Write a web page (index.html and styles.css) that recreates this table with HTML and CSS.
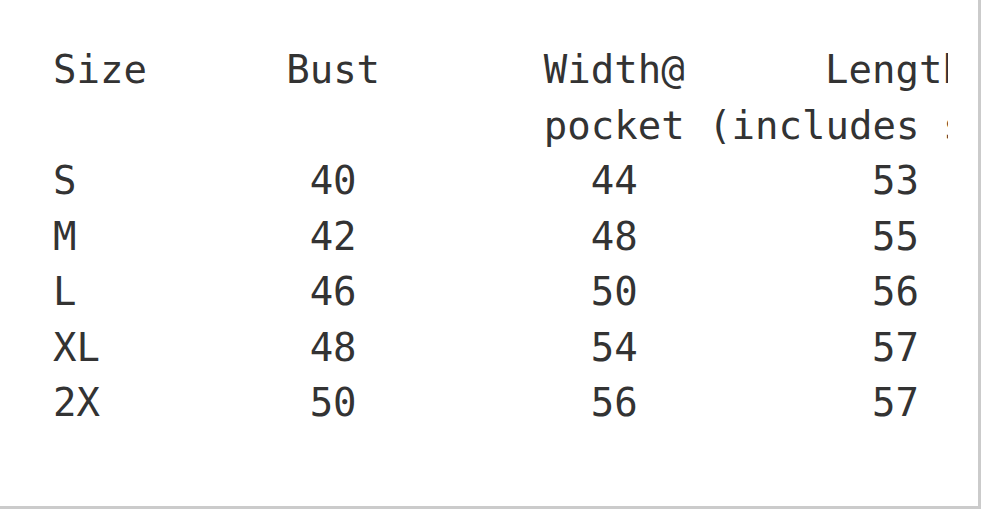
FILE: index.html
```html
<!DOCTYPE html>
<html>
<head>
<meta charset="utf-8">
<link rel="stylesheet" href="styles.css">
</head>
<body>
<div class="page">
  <div class="scroll">
    <table class="sizes">
      <colgroup>
        <col class="c1"><col class="c2"><col class="c3"><col class="c4">
      </colgroup>
      <thead>
        <tr>
          <th class="left">Size</th>
          <th>Bust</th>
          <th><div class="stack"><span>Width@</span><span class="nowrap">pocket (includes shoulder)</span></div></th>
          <th>Length</th>
        </tr>
      </thead>
      <tbody>
        <tr><td class="left">S</td><td>40</td><td>44</td><td>53</td></tr>
        <tr><td class="left">M</td><td>42</td><td>48</td><td>55</td></tr>
        <tr><td class="left">L</td><td>46</td><td>50</td><td>56</td></tr>
        <tr><td class="left">XL</td><td>48</td><td>54</td><td>57</td></tr>
        <tr><td class="left">2X</td><td>50</td><td>56</td><td>57</td></tr>
      </tbody>
    </table>
  </div>
</div>
</body>
</html>
```

FILE: styles.css
```css
html, body {
  margin: 0;
  padding: 0;
  background: #fff;
}
.page {
  width: 978px;
  height: 506px;
  border-right: 3px solid #cbcbcb;
  border-bottom: 3px solid #cbcbcb;
  background: #fff;
  overflow: hidden;
}
.scroll {
  margin-left: 53px;
  padding-top: 42px;
  width: 895px;
  overflow: hidden;
}
.sizes {
  border-collapse: collapse;
  table-layout: fixed;
  width: 983px;
  font-family: "DejaVu Sans Mono", monospace;
  font-size: 39px;
  line-height: 55.5px;
  color: #333;
}
.c1 { width: 139.5px; }
.c2, .c3, .c4 { width: 281px; }
.sizes th, .sizes td {
  padding: 0;
  font-weight: normal;
  text-align: center;
  vertical-align: top;
  white-space: nowrap;
}
.sizes .left { text-align: left; }
.stack {
  width: 141px;
  margin: 0 auto;
  text-align: left;
}
.stack span { display: block; }
```
